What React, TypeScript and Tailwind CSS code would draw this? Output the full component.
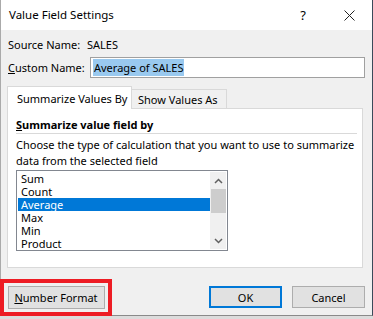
import React from "react";

const items = ["Sum", "Count", "Average", "Max", "Min", "Product"];

function Btn({ children, primary }: { children: React.ReactNode; primary?: boolean }) {
  return (
    <div
      className={
        "flex h-[22px] w-[73px] items-center justify-center bg-[#e1e1e1] " +
        (primary ? "border-2 border-[#0078d7]" : "border border-[#adadad]")
      }
    >
      {children}
    </div>
  );
}

export default function App() {
  return (
    <div
      className="h-[319px] w-[373px] overflow-hidden whitespace-nowrap bg-[#dcdcdc] text-[11px] leading-none text-black"
      style={{ fontFamily: '"Noto Sans", "Liberation Sans", sans-serif' }}
    >
      <div className="flex h-[316px] w-[373px] flex-col border-r border-[#3a4a5a] border-l border-l-[#aaaaaa] border-b border-b-[#8a8a8a] bg-[#f0f0f0]">
        {/* title bar */}
        <div className="flex h-[30px] shrink-0 items-center bg-white pl-[8px]">
          <span className="text-[11.5px]">Value Field Settings</span>
          <span className="ml-auto mr-[38px] text-[13px]">?</span>
          <svg width="11" height="11" viewBox="0 0 11 11" className="mr-[17px]">
            <path d="M0.5 0.5 L10.5 10.5 M10.5 0.5 L0.5 10.5" stroke="#222" strokeWidth="1" />
          </svg>
        </div>

        <div className="flex flex-1 flex-col px-[6px]">
          <div className="mt-[6px] flex h-[16px] items-center pl-[1px]">
            <span className="w-[79px] shrink-0">Source Name:</span>
            <span>SALES</span>
          </div>

          <div className="mt-[5px] flex items-center pl-[1px]">
            <span className="w-[82px] shrink-0">
              <span className="underline">C</span>ustom Name:
            </span>
            <div className="flex h-[21px] w-[275px] shrink-0 items-center border border-[#a0a0a0] bg-white pl-[2px]">
              <span className="bg-[#99c9ef] px-[1px] py-[3px]">Average of SALES</span>
            </div>
          </div>

          {/* tabs */}
          <div className="mt-[8px] flex items-end">
            <div className="relative z-10 -mb-px flex h-[23px] w-[125px] shrink-0 items-center border border-b-0 border-[#d9d9d9] bg-white pl-[9px]">
              Summarize Values By
            </div>
            <div className="flex h-[19px] w-[95px] shrink-0 items-center border border-b-0 border-l-0 border-[#d9d9d9] pl-[6px]">
              Show Values As
            </div>
          </div>

          <div className="flex h-[160px] w-[356px] flex-col border border-[#d9d9d9] bg-white px-[8px]">
            <div className="mt-[10px] font-bold">
              <span className="underline">S</span>ummarize value field by
            </div>
            <div className="mt-[3px] h-px w-[341px] bg-[#d9d9d9]" />
            <div className="mt-[3px] leading-[16px]">
              Choose the type of calculation that you want to use to summarize
              <br />
              data from the selected field
            </div>
            <div className="mt-px flex h-[81px] w-[212px] border border-[#828790] bg-white p-px">
              <div className="flex-1">
                {items.map((it) => (
                  <div
                    key={it}
                    className={
                      "h-[13px] pl-[3px] leading-[13px] " +
                      (it === "Average" ? "bg-[#0078d7] text-white" : "")
                    }
                  >
                    {it}
                  </div>
                ))}
              </div>
              <div className="flex w-[16px] flex-col items-center bg-[#f0f0f0]">
                <svg width="9" height="6" viewBox="0 0 9 6" className="mt-[6px]">
                  <path d="M1 5 L4.5 1.5 L8 5" fill="none" stroke="#606060" strokeWidth="1.5" />
                </svg>
                <div className="mt-[5px] h-[24px] w-[15px] bg-[#cdcdcd]" />
                <svg width="9" height="6" viewBox="0 0 9 6" className="mt-auto mb-[5px]">
                  <path d="M1 1 L4.5 4.5 L8 1" fill="none" stroke="#606060" strokeWidth="1.5" />
                </svg>
              </div>
            </div>
          </div>

          {/* buttons */}
          <div className="mt-[11px] flex items-start">
            <div className="-ml-[7px] flex h-[37px] w-[112px] shrink-0 items-center justify-center border-[4px] border-[#ed1c24]">
              <div className="flex h-[23px] w-[97px] items-center justify-center border border-[#adadad] bg-[#e1e1e1]">
                <span>
                  <span className="underline">N</span>umber Format
                </span>
              </div>
            </div>
            <div className="ml-auto mt-[7px] flex gap-[10px] pr-[1px]">
              <Btn primary>OK</Btn>
              <Btn>Cancel</Btn>
            </div>
          </div>
        </div>
      </div>
    </div>
  );
}
